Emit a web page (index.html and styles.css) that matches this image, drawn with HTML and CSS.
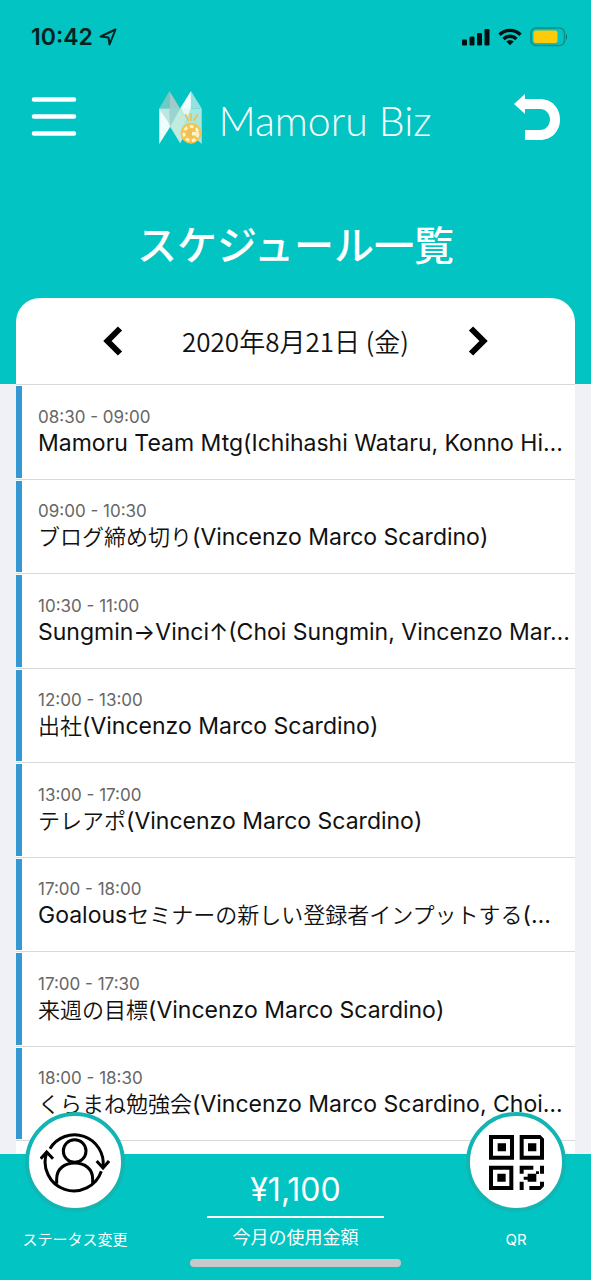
FILE: index.html
```html
<!DOCTYPE html>
<html lang="ja">
<head>
<meta charset="utf-8">
<meta name="viewport" content="width=device-width, initial-scale=1">
<title>Mamoru Biz</title>
<link rel="stylesheet" href="styles.css">
</head>
<body>
<header class="top">
  <div class="status">
    <div class="status-side">
      <span class="clock">10:42</span>
      <svg class="locate" width="18" height="18" viewBox="0 0 18 18"><path d="M1.500 8.500 16.500 1.500 10.500 16.500 9.500 9.500Z" fill="none" stroke="#04211f" stroke-width="2" stroke-linejoin="round"/></svg>
    </div>
    <div class="status-side">
      <svg width="28" height="18" viewBox="0 0 28 18" fill="#02110f"><rect x="0" y="11.500" width="5" height="6" rx="1.300"/><rect x="7.500" y="8.500" width="5" height="9" rx="1.300"/><rect x="15" y="5" width="5" height="12.500" rx="1.300"/><rect x="22.500" y="1" width="5" height="16.500" rx="1.300"/></svg>
      <svg width="24" height="18" viewBox="0 0 24 18" fill="none" stroke="#02110f" stroke-width="3.400"><path d="M1.500 6.800C7.300.9 16.700.9 22.500 6.800"/><path d="M5.500 10.900C9.200 7.400 14.800 7.400 18.500 10.900"/><path d="M12 17.300 8.200 13.500C10.400 11.700 13.600 11.700 15.800 13.500Z" fill="#02110f" stroke="none"/></svg>
      <svg width="38" height="20" viewBox="0 0 38 20"><rect x="1" y="1" width="33.500" height="17.500" rx="5" fill="none" stroke="#128d88" stroke-width="1.600"/><rect x="3.500" y="3.500" width="24" height="12.500" rx="2.500" fill="#fdcb0a"/><path d="M36 6.500Q38 9.800 36 13Z" fill="#05635f"/></svg>
    </div>
  </div>
  <nav class="bar">
    <button class="icon-button" aria-label="メニュー"><svg width="46" height="42" viewBox="0 0 46 42" stroke="#fff" stroke-width="4.600" stroke-linecap="round"><path d="M3 3.500H43M3 20.500H43M3 37.500H43"/></svg></button>
    <div class="brand">
      <svg width="43" height="53" viewBox="0 0 126 157">
        <path d="M30 0 0 52H30Z" fill="#6fc9c6"/><path d="M30 0 62 52H30Z" fill="#a5c9c6"/>
        <path d="M94 0 62 52 94 57Z" fill="#f2ffff"/><path d="M94 0 126 52H94Z" fill="#94e1df"/>
        <path d="M0 52H62L31 106Z" fill="#bde6e3"/><path d="M0 52 34 104 0 157Z" fill="#effdfc"/>
        <path d="M30 52H62L31 106Z" fill="#9bd3d0"/><path d="M62 52 94 100 62 155 32 105Z" fill="#c2ebdf"/>
        <path d="M62 52H94V100Z" fill="#e4f8f5"/><path d="M94 52H126V157L70 105Z" fill="#a6e8df"/>
        <circle cx="94" cy="125" r="31" fill="#f4c451"/><circle cx="94" cy="126" r="21" fill="none" stroke="#fff5ce" stroke-width="8" stroke-dasharray="11 8"/><circle cx="94" cy="125" r="12" fill="#efc05a"/><path d="M97 121H117V132H97Z" fill="#fff2c4"/>
        <path d="M78 70 86 86M94 68V86M113 70 104 86" stroke="#efbe4c" stroke-width="5" stroke-linecap="round"/>
      </svg>
      <span class="brand-name">Mamoru Biz</span>
    </div>
    <button class="icon-button" aria-label="戻る"><svg width="46" height="46" viewBox="0 0 46 46" fill="#fff"><path d="M0 10 11 0V5H26C38 5 46 14 46 25.500S38 46 26 46H11V36H26C32 36 36 31 36 25.500S32 15 26 15H11V20Z"/></svg></button>
  </nav>
  <h1 class="title">スケジュール一覧</h1>
  <div class="date-bar">
    <button class="icon-button" aria-label="前の日"><svg width="20" height="30" viewBox="0 0 20 30" fill="none" stroke="#000" stroke-width="6"><path d="M17 2.500 4.500 15 17 27.500"/></svg></button>
    <time class="date" datetime="2020-08-21">2020年8月21日 (金)</time>
    <button class="icon-button" aria-label="次の日"><svg width="20" height="30" viewBox="0 0 20 30" fill="none" stroke="#000" stroke-width="6"><path d="M3 2.500 15.500 15 3 27.500"/></svg></button>
  </div>
</header>
<main class="content">
  <ul class="events">
    <li class="event"><div class="event-body"><span class="hours">08:30 - 09:00</span><span class="name">Mamoru Team Mtg(Ichihashi Wataru, Konno Hi…</span></div></li>
    <li class="event"><div class="event-body"><span class="hours">09:00 - 10:30</span><span class="name"><span class="kana">ブログ締め切り</span>(Vincenzo Marco Scardino)</span></div></li>
    <li class="event"><div class="event-body"><span class="hours">10:30 - 11:00</span><span class="name">Sungmin→Vinci↑(Choi Sungmin, Vincenzo Mar…</span></div></li>
    <li class="event"><div class="event-body"><span class="hours">12:00 - 13:00</span><span class="name"><span class="kana">出社</span>(Vincenzo Marco Scardino)</span></div></li>
    <li class="event"><div class="event-body"><span class="hours">13:00 - 17:00</span><span class="name"><span class="kana">テレアポ</span>(Vincenzo Marco Scardino)</span></div></li>
    <li class="event"><div class="event-body"><span class="hours">17:00 - 18:00</span><span class="name">Goalous<span class="kana">セミナーの新しい登録者インプットする</span>(…</span></div></li>
    <li class="event"><div class="event-body"><span class="hours">17:00 - 17:30</span><span class="name"><span class="kana">来週の目標</span>(Vincenzo Marco Scardino)</span></div></li>
    <li class="event"><div class="event-body"><span class="hours">18:00 - 18:30</span><span class="name"><span class="kana">くらまね勉強会</span>(Vincenzo Marco Scardino, Choi…</span></div></li>
  </ul>
</main>
<footer class="footer">
  <button class="action">
    <span class="disc"><svg width="70" height="62" viewBox="117 150 210 186" fill="none" stroke="#000" stroke-width="9"><circle cx="221" cy="210" r="34"/><path d="M167 308V294C167 264 190 246 221 246S275 264 275 294V308"/><path d="M147 203A86 86 0 0 1 306 258"/><path d="M301 271A86 86 0 0 1 137 215"/><path d="M119 233 137 213 156 233M287 240 306 261 324 240"/></svg></span>
    <span class="action-label">ステータス変更</span>
  </button>
  <div class="usage">
    <strong class="amount">¥1,100</strong>
    <span class="usage-label">今月の使用金額</span>
    <span class="home-indicator"></span>
  </div>
  <button class="action">
    <span class="disc"><svg width="55" height="55" viewBox="0 0 165 165" fill="#000"><path fill-rule="evenodd" d="M0 0H75V74H0ZM12 12V62H63V12ZM26 25H51V49H26Z"/><path fill-rule="evenodd" d="M92 0H154L165 11V74H92ZM104 12V62H153V12ZM117 25H142V49H117Z"/><path fill-rule="evenodd" d="M0 92H73V165H0ZM12 104V153H61V104ZM25 116H50V140H25Z"/><path d="M92 92H133V104H104V116H92ZM153 92H165V116H153ZM116 116H142V140H116ZM104 125H117V134H104ZM141 109H150V117H141ZM92 140H104V165H92ZM121 153H153V140H165V154L154 165H121Z"/></svg></span>
    <span class="action-label">QR</span>
  </button>
</footer>
</body>
</html>
```
FILE: styles.css
```css
* { box-sizing: border-box; }

body {
  margin: 0;
  min-height: 100vh;
  display: flex;
  flex-direction: column;
  background: #f0f0f7;
  color: #111;
  font-family: Inter, "Noto Sans CJK JP", sans-serif;
}

button {
  margin: 0;
  padding: 0;
  border: 0;
  background: none;
  color: inherit;
  font: inherit;
  cursor: pointer;
}

svg { display: block; }

.top { padding: 0 16px; background: #02c4c3; }

.status {
  display: flex;
  justify-content: space-between;
  align-items: center;
  height: 74px;
  padding: 0 7px 0 15px;
}
.status-side { display: flex; align-items: center; gap: 8px; }
.status-side:first-child { gap: 6px; }
.clock { color: #04211f; font-size: 23px; font-weight: 600; line-height: 28px; }

.bar {
  display: flex;
  justify-content: space-between;
  align-items: center;
  height: 86px;
  padding: 0 15px;
}
.icon-button { display: flex; }
.brand { display: flex; align-items: center; gap: 16px; }
.brand-name {
  padding-top: 8px;
  color: #fff;
  font-family: Lato, sans-serif;
  font-size: 41px;
  font-weight: 300;
  line-height: 48px;
}

.title {
  margin: 0;
  padding: 56px 0 22px;
  color: #fff;
  font-size: 40px;
  font-weight: 500;
  line-height: 60px;
  text-align: center;
}

.date-bar {
  display: flex;
  justify-content: center;
  align-items: center;
  gap: 59px;
  height: 86px;
  border-radius: 24px 24px 0 0;
  background: #fff;
}
.date { font-family: "Noto Sans CJK JP", sans-serif; font-size: 26px; font-weight: 350; line-height: 40px; }

.content { flex: 1; display: flex; padding: 0 16px; }
.events {
  flex: 1;
  min-width: 0;
  display: grid;
  grid-auto-rows: 1fr;
  margin: 0;
  padding: 0 0 13px;
  border-top: 1px solid #d9d9d9;
  background: #fff;
  list-style: none;
}
.event { display: flex; min-width: 0; padding: 1px 0; border-bottom: 1px solid #d9d9d9; }
.event-body {
  flex: 1;
  min-width: 0;
  display: flex;
  flex-direction: column;
  justify-content: center;
  padding: 0 0 0 16px;
  border-left: 6px solid #3598d3;
}
.hours { color: #666; font-size: 17px; line-height: 22px; }
.name {
  overflow: hidden;
  font-size: 23px;
  line-height: 30px;
  text-overflow: ellipsis;
  white-space: nowrap;
}
.kana { font-size: 22px; font-weight: 350; }

.footer {
  display: grid;
  grid-template-columns: 150px 1fr 150px;
  height: 126px;
  background: #02c4c3;
  color: #fff;
}
.action {
  display: flex;
  flex-direction: column;
  align-items: center;
  gap: 18px;
  margin-top: -42px;
}
.disc {
  display: flex;
  justify-content: center;
  align-items: center;
  width: 100px;
  height: 100px;
  border: 4px solid #13b5b3;
  border-radius: 50%;
  background: #fff;
}
.action-label { font-size: 15px; line-height: 20px; }
.usage { display: flex; flex-direction: column; align-items: center; padding-top: 14px; }
.amount {
  width: 177px;
  padding-bottom: 4px;
  border-bottom: 2px solid #fff;
  font-size: 32px;
  font-weight: 400;
  line-height: 44px;
  text-align: center;
}
.usage-label { padding-top: 7px; font-size: 18px; line-height: 26px; }
.home-indicator { width: 211px; height: 8px; margin-top: 8px; border-radius: 4px; background: #c8c8c8; }
```
